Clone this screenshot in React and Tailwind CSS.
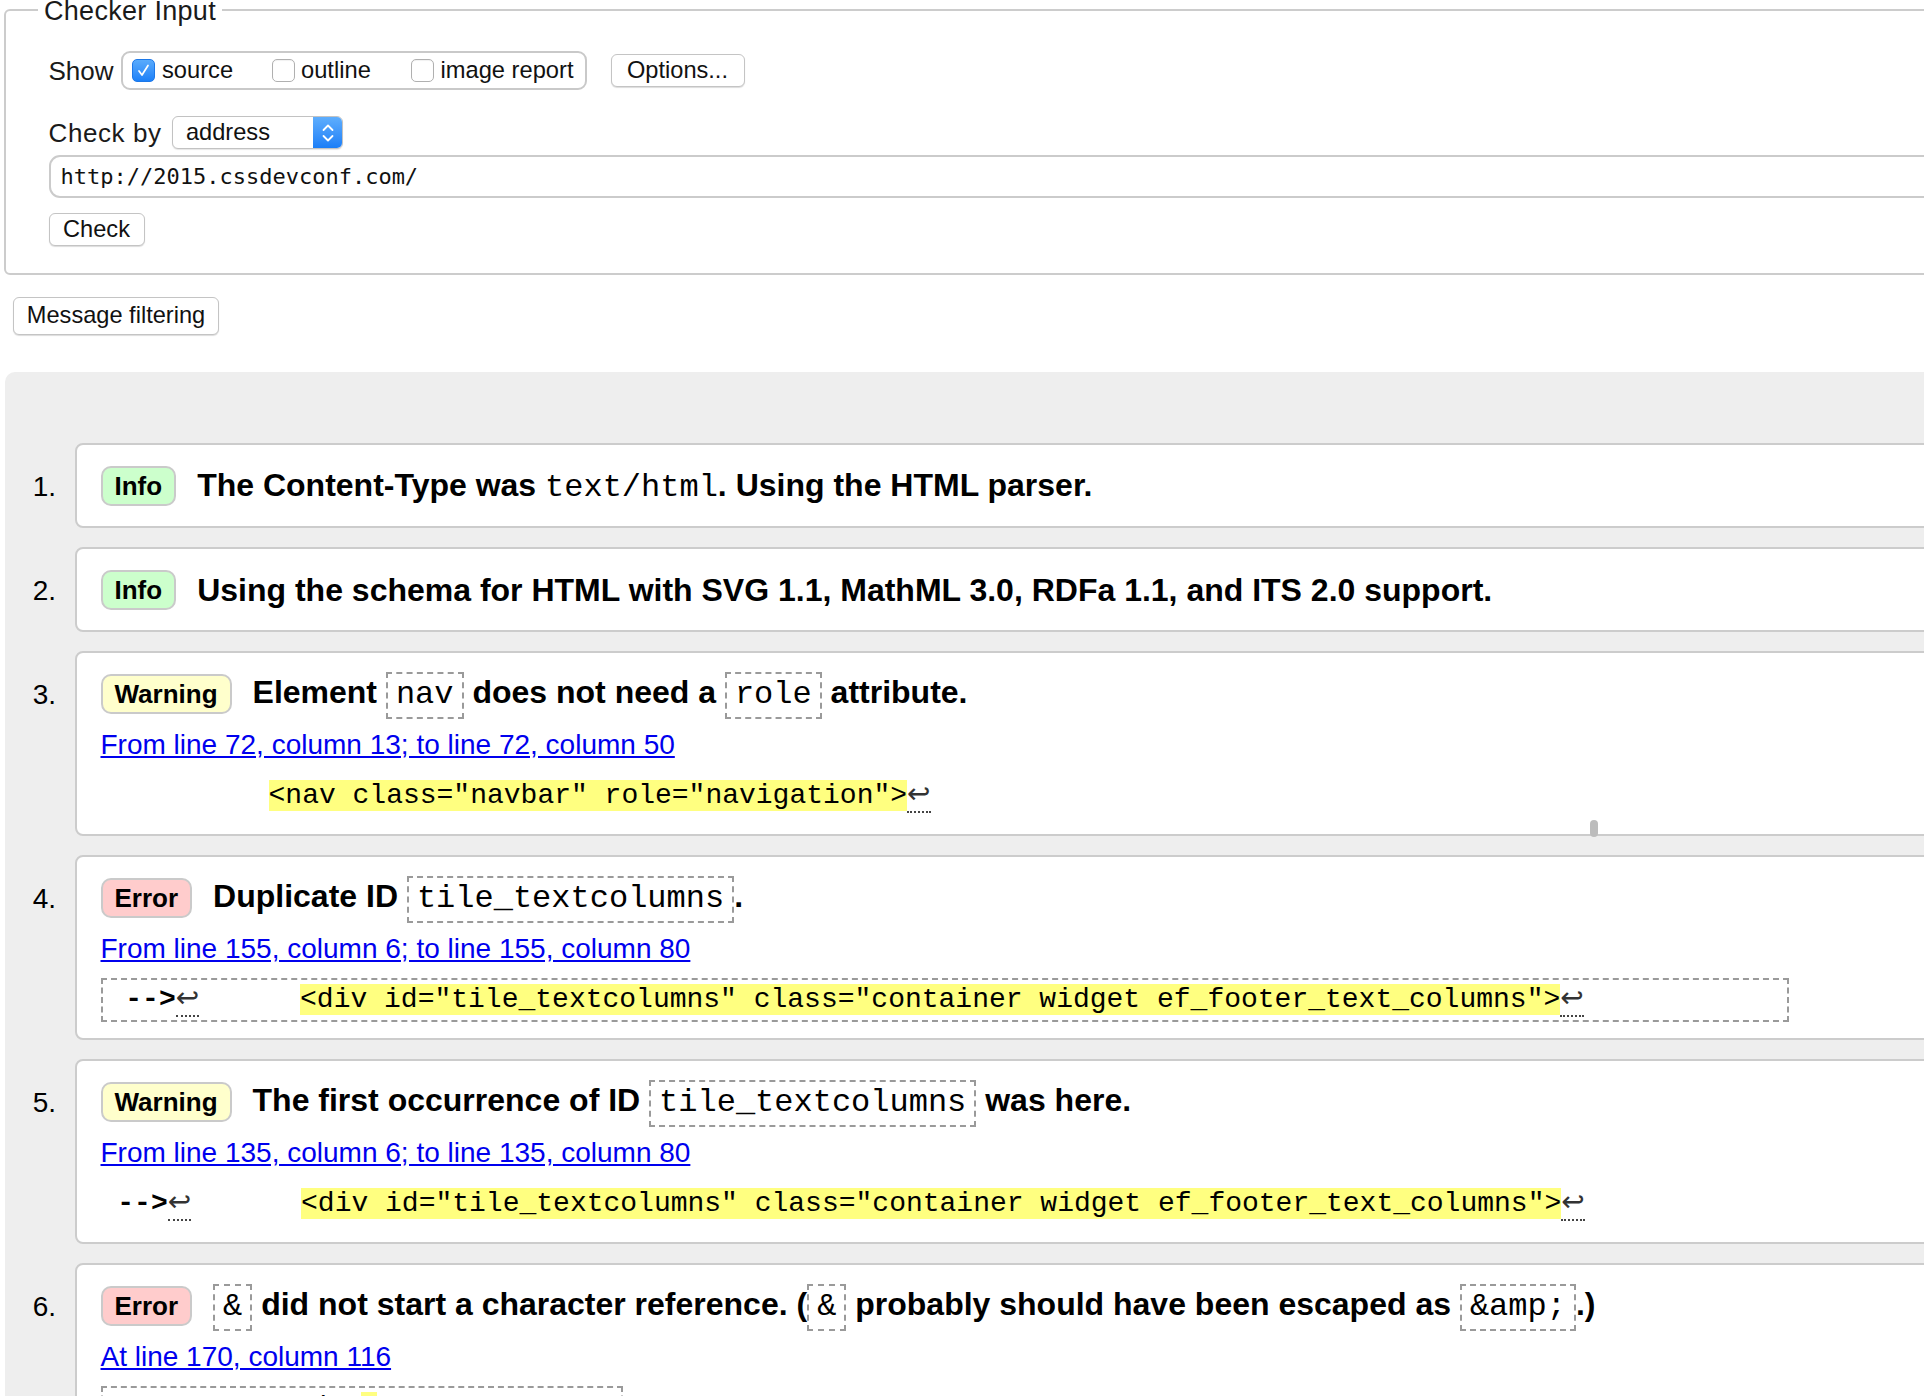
import React from "react";

const MONO = "font-['Liberation_Mono','Courier_New',monospace]";

function Checkbox({ checked }) {
  if (checked)
    return (
      <span className="inline-flex items-center justify-center w-[23px] h-[23px] rounded-[5px] bg-linear-to-b from-[#59abfc] to-[#1b80f8] border border-[#1d78e8] shrink-0">
        <svg width="17" height="17" viewBox="0 0 17 17">
          <path d="M4 9 L7 13 L13 3.5" fill="none" stroke="white" strokeWidth="1.7" strokeLinecap="round" strokeLinejoin="round" />
        </svg>
      </span>
    );
  return (
    <span className="inline-block w-[23px] h-[23px] rounded-[5px] bg-white border-[1.5px] border-[#b0b0b0] shadow-[inset_0_1px_1px_rgba(0,0,0,0.06)] shrink-0" />
  );
}

function Btn({ className, children }) {
  return (
    <div
      className={
        "flex items-center justify-center bg-white border-[1.5px] border-[#c4c4c4] rounded-[6px] shadow-[0_1px_1px_rgba(0,0,0,0.14)] text-[23.6px] text-[#111111] shrink-0 " +
        className
      }
    >
      {children}
    </div>
  );
}

function Badge({ type }) {
  const bg =
    type === "Info" ? "bg-[#ccffcc]" : type === "Warning" ? "bg-[#ffffcc]" : "bg-[#ffcccc]";
  return (
    <span
      className={
        "inline-flex items-center h-[40px] px-[12px] border-2 border-[#cacaca] rounded-[10px] font-bold text-[26px] leading-none shrink-0 " +
        bg
      }
    >
      {type}
    </span>
  );
}

function C({ children }) {
  return (
    <code
      className={
        "inline-block border-2 border-dashed border-[#9a9a9a] px-[8px] py-[3.5px] font-normal text-[32px] leading-[36px] " +
        MONO
      }
    >
      {children}
    </code>
  );
}

function LF() {
  return (
    <span className="border-b-2 border-dotted border-[#444444] text-[#333333] font-['Liberation_Mono','DejaVu_Sans',sans-serif]">
      ↩
    </span>
  );
}

function Hl({ children, className = "" }) {
  return <span className={"bg-[#ffff80] " + className}>{children}</span>;
}

function Item({ n, children }) {
  return (
    <div className="flex items-start">
      <div className="w-[51px] shrink-0 text-right text-[28px] leading-[32px] mt-[28.5px]">{n}.</div>
      <div className="relative ml-[19px] w-[2000px] shrink-0 bg-white border-2 border-[#cccccc] rounded-[8px] pt-[18px] pb-[16.5px] pl-[23.5px]">
        {children}
      </div>
    </div>
  );
}

function Title({ type, children }) {
  return (
    <div className="flex items-center h-[47px] gap-[21px]">
      <Badge type={type} />
      <span className="text-[32px] font-bold leading-[47px] whitespace-nowrap">{children}</span>
    </div>
  );
}

function Loc({ children }) {
  return (
    <div className="mt-[9px] leading-[36px] text-[28px]">
      <a className="text-[#0000ee] underline">{children}</a>
    </div>
  );
}

export default function App() {
  return (
    <div className="w-[1924px] h-[1396px] overflow-hidden bg-white text-black font-['Liberation_Sans',Arial,sans-serif]">
      <div className="w-[2200px]">
        {/* Checker Input fieldset */}
        <div className="relative ml-[4px] mt-[9px] border-2 border-[#cccccc] rounded-[6px] pl-[42.5px] pt-[40px] pb-[27px]">
          <span className="absolute left-[32px] top-[-15.5px] bg-white px-[6px] text-[27px] leading-[31px] tracking-[0.3px] text-[#1a1a1a]">
            Checker Input
          </span>

          <div className="flex items-center h-[39px]">
            <span className="w-[72.5px] shrink-0 text-[26px] leading-[30px] text-[#1a1a1a]">Show</span>
            <div className="flex items-center h-[39px] w-[466px] shrink-0 border-2 border-[#c9c9c9] rounded-[9px] bg-white pl-[9px] text-[23.7px] text-[#111111]">
              <label className="flex items-center w-[140px] shrink-0">
                <Checkbox checked />
                <span className="ml-[7px]">source</span>
              </label>
              <label className="flex items-center w-[138.5px] shrink-0">
                <Checkbox />
                <span className="ml-[6px]">outline</span>
              </label>
              <label className="flex items-center shrink-0">
                <Checkbox />
                <span className="ml-[7px]">image report</span>
              </label>
            </div>
            <Btn className="ml-[23.5px] h-[33.5px] w-[134px]">Options...</Btn>
          </div>

          <div className="flex items-center h-[33px] mt-[26px]">
            <span className="w-[123.5px] shrink-0 text-[26px] leading-[30px] tracking-[0.6px] text-[#1a1a1a]">Check by</span>
            <div className="flex h-[33px] w-[171px] shrink-0 border-[1.5px] border-[#c2c2c2] rounded-[6px] overflow-hidden bg-white shadow-[0_1px_1px_rgba(0,0,0,0.1)]">
              <span className="flex-1 flex items-center pl-[13px] text-[23.6px] text-[#111111]">address</span>
              <span className="w-[29px] h-full flex items-center justify-center bg-linear-to-b from-[#5eaefd] to-[#1a7ef7]">
                <svg width="14" height="24" viewBox="0 0 14 24">
                  <path d="M2.5 9 L7 4.5 L11.5 9" fill="none" stroke="white" strokeWidth="1.8" strokeLinecap="round" strokeLinejoin="round" />
                  <path d="M2.5 15 L7 19.5 L11.5 15" fill="none" stroke="white" strokeWidth="1.8" strokeLinecap="round" strokeLinejoin="round" />
                </svg>
              </span>
            </div>
          </div>

          <div className="mt-[6px] h-[43px] w-[2000px] flex items-center border-2 border-[#cbcbcb] rounded-[11px] pl-[10px] font-['DejaVu_Sans_Mono',monospace] text-[22px] text-[#111111]">
            http://2015.cssdevconf.com/
          </div>

          <Btn className="mt-[15px] h-[33px] w-[96px]">Check</Btn>
        </div>

        <Btn className="ml-[13px] mt-[21.7px] h-[38px] w-[206px]">Message filtering</Btn>

        {/* Results */}
        <div className="mt-[37px] ml-[5px] h-[1100px] bg-[#eeeeee] rounded-tl-[10px] pt-[71px] flex flex-col gap-[18.5px]">
          <Item n={1}>
            <Title type="Info">
              The Content-Type was <code className={"font-normal text-[32px] " + MONO}>text/html</code>. Using the HTML parser.
            </Title>
          </Item>

          <Item n={2}>
            <Title type="Info">Using the schema for HTML with SVG 1.1, MathML 3.0, RDFa 1.1, and ITS 2.0 support.</Title>
          </Item>

          <Item n={3}>
            <Title type="Warning">
              Element <C>nav</C> does not need a <C>role</C> attribute.
            </Title>
            <Loc>From line 72, column 13; to line 72, column 50</Loc>
            <div className={"mt-[11px] py-[6px] text-[28px] leading-[32px] whitespace-pre " + MONO}>
              {"          "}
              <Hl>{'<nav class="navbar" role="navigation">'}</Hl>
              <LF />
            </div>
            <span className="absolute left-[1513px] top-[167px] w-[8px] h-[17px] rounded-[4px] bg-[#bcbcbc]" />
          </Item>

          <Item n={4}>
            <Title type="Error">
              Duplicate ID <C>tile_textcolumns</C>.
            </Title>
            <Loc>From line 155, column 6; to line 155, column 80</Loc>
            <div className={"mt-[11px] w-[1688px] border-2 border-dashed border-[#9a9a9a] px-[6px] py-[4px] text-[28px] leading-[32px] whitespace-pre " + MONO}>
              {" "}
              <span className="font-bold">--&gt;</span>
              <LF />
              {"      "}
              <Hl>{'<div id="tile_textcolumns" class="container widget ef_footer_text_columns">'}</Hl>
              <LF />
            </div>
          </Item>

          <Item n={5}>
            <Title type="Warning">
              The first occurrence of ID <C>tile_textcolumns</C> was here.
            </Title>
            <Loc>From line 135, column 6; to line 135, column 80</Loc>
            <div className={"mt-[11px] py-[6px] text-[28px] leading-[32px] whitespace-pre " + MONO}>
              {" "}
              <span className="font-bold">--&gt;</span>
              <LF />
              {"      "}
              <Hl className="ml-[9px]">{'<div id="tile_textcolumns" class="container widget ef_footer_text_columns">'}</Hl>
              <LF />
            </div>
          </Item>

          <Item n={6}>
            <Title type="Error">
              <C>&amp;</C> did not start a character reference. (<C>&amp;</C> probably should have been escaped as <C>&amp;amp;</C>.)
            </Title>
            <Loc>At line 170, column 116</Loc>
            <div className={"mt-[11px] w-[522px] border-2 border-dashed border-[#9a9a9a] px-[6px] py-[4px] text-[28px] leading-[32px] whitespace-pre " + MONO}>
              {" Sponsors and t"}
              <Hl>&amp;</Hl>
              {"a=1 partners"}
              <LF />
            </div>
          </Item>
        </div>
      </div>
    </div>
  );
}
